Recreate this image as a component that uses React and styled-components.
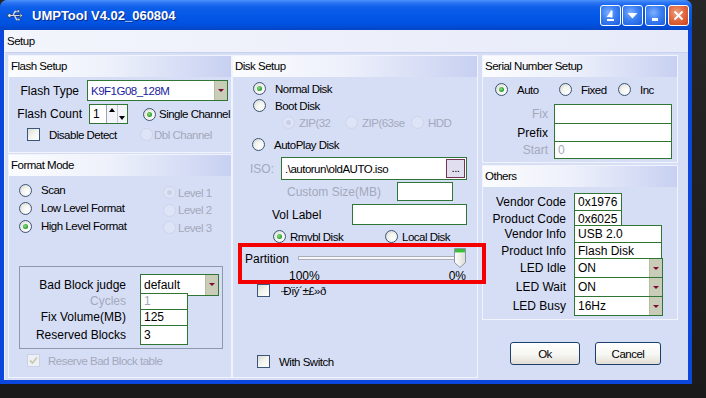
import React from "react";
import styled, { createGlobalStyle, css } from "styled-components";

const GlobalStyle = createGlobalStyle`
  html, body {
    margin: 0;
    padding: 0;
    background: #1e1e1e;
  }
  body {
    font-family: "Liberation Sans", Arial, sans-serif;
    font-size: 12px;
  }
`;

// the dialog's captions use a narrow face; squeeze Arial metrics to match
const narrow = css`
  font-family: "Liberation Sans", Arial, sans-serif;
  font-size: 11.5px;
  letter-spacing: -0.5px;
`;

const GREEN = "#2f7535";
const GREY_TEXT = "#a3a9bb";

const Screen = styled.div`
  width: 706px;
  height: 398px;
  background: linear-gradient(180deg, #262626, #1a1a1a);
  overflow: hidden;
`;

const Window = styled.div`
  width: 692px;
  height: 384px;
  background: #0b47dc;
  border-radius: 8px 8px 0 0;
  display: flex;
  flex-direction: column;
`;

const TitleBar = styled.div`
  height: 30px;
  flex: none;
  display: flex;
  align-items: center;
  padding: 0 3px 0 7px;
  border-radius: 7px 7px 0 0;
  background: linear-gradient(
    180deg,
    #4a92fa 0%,
    #2a72f2 10%,
    #0d5ee9 25%,
    #0457e6 55%,
    #0051e0 80%,
    #0445c6 100%
  );
`;

const TitleText = styled.span`
  font-family: "Liberation Sans", Arial, sans-serif;
  font-weight: bold;
  font-size: 13px;
  color: #fff;
  text-shadow: 1px 1px 0 #0a2a8a;
  margin-left: 9px;
  flex: 1;
`;

const CaptionButtons = styled.div`
  display: flex;
  align-items: center;
  gap: 1px;
`;

const CapButton = styled.div`
  width: 21px;
  height: 21px;
  box-sizing: border-box;
  border: 1px solid #fff;
  border-radius: 3px;
  margin-left: ${(p) => p.$ml || 0}px;
  display: flex;
  align-items: center;
  justify-content: center;
  background: ${(p) =>
    p.$close
      ? "radial-gradient(circle at 40% 35%, #f0a080 0%, #e36b43 45%, #c9421c 100%)"
      : "radial-gradient(circle at 40% 35%, #7fb0ff 0%, #3b7ff2 45%, #1a5ce0 100%)"};
`;

const Client = styled.div`
  flex: 1;
  margin: 0 4px 4px;
  background: #d6def6;
  border-left: 1px solid #eef2fc;
  display: flex;
  flex-direction: column;
`;

const SetupBar = styled.div`
  ${narrow};
  height: 22px;
  line-height: 22px;
  padding-left: 2px;
  background: linear-gradient(90deg, #f3f5fc, #e7ebf9);
  border-bottom: 1px solid #c8d0ee;
`;

const Columns = styled.div`
  display: grid;
  grid-template-columns: 224px 246px 200px;
  padding: 2px 0 2px 3px;
  height: 323px;
`;

const LeftCol = styled.div`
  display: grid;
  grid-template-rows: 98px 1fr;
  row-gap: 1px;
`;

const RightCol = styled.div`
  margin-left: 4px;
  display: flex;
  flex-direction: column;
  gap: 2px;
`;

const Panel = styled.section`
  box-sizing: border-box;
  border: 1px solid #f1f4fc;
  height: ${(p) => (p.$h ? `${p.$h}px` : "auto")};
  display: flex;
  flex-direction: column;
`;

const PanelHeader = styled.div`
  ${narrow};
  height: 21px;
  line-height: 21px;
  padding-left: 2px;
  flex: none;
  background: linear-gradient(90deg, #fbfcfe 0%, #eef1fb 45%, #c7d0f1 100%);
`;

const PanelBody = styled.div`
  padding-top: ${(p) => p.$pt || 0}px;
  display: flex;
  flex-direction: column;
`;

const FieldRow = styled.div`
  display: flex;
  align-items: center;
  gap: ${(p) => p.$gap || 0}px;
  padding-left: ${(p) => p.$pl || 0}px;
  margin-top: ${(p) => p.$mt || 0}px;
  height: ${(p) => (p.$h ? `${p.$h}px` : "auto")};
  flex: none;
`;

const FieldLabel = styled.span`
  font-family: "Liberation Sans", Arial, sans-serif;
  font-size: 12px;
  width: ${(p) => p.$w}px;
  text-align: ${(p) => (p.$left ? "left" : "right")};
  color: ${(p) => (p.$disabled ? GREY_TEXT : "#000")};
  white-space: nowrap;
  flex: none;
`;

const Caption = styled.span`
  ${narrow};
  color: ${(p) => (p.$disabled ? GREY_TEXT : "#000")};
  white-space: nowrap;
`;

const Option = styled.div`
  display: flex;
  align-items: center;
  gap: ${(p) => p.$gap ?? 9}px;
  width: ${(p) => (p.$w ? `${p.$w}px` : "auto")};
  height: ${(p) => (p.$h ? `${p.$h}px` : "auto")};
  margin-left: ${(p) => p.$ml || 0}px;
  flex: none;
`;

const RadioDot = styled.span`
  width: 13px;
  height: 13px;
  box-sizing: border-box;
  border-radius: 50%;
  flex: none;
  display: flex;
  align-items: center;
  justify-content: center;
  border: 1px solid ${(p) => (p.$disabled ? "#cdd4e8" : "#3b5678")};
  background: ${(p) =>
    p.$disabled
      ? "#dde4f7"
      : "radial-gradient(circle at 65% 65%, #ffffff 0%, #f3f3ef 45%, #d2d2ca 100%)"};

  &::after {
    content: "";
    display: ${(p) => (p.$checked ? "block" : "none")};
    width: 5px;
    height: 5px;
    border-radius: 50%;
    background: ${(p) =>
      p.$disabled
        ? "#c9d0e4"
        : "radial-gradient(circle at 40% 40%, #8ee08e 0%, #2ea52e 60%, #1d7d1d 100%)"};
  }
`;

const CheckBox = styled.span`
  width: 13px;
  height: 13px;
  box-sizing: border-box;
  flex: none;
  border: 1px solid ${(p) => (p.$disabled ? "#cbd2e6" : "#3b5678")};
  background: ${(p) =>
    p.$disabled
      ? "#eef0f6"
      : "linear-gradient(135deg, #dcdcd6 0%, #f4f4f0 50%, #ffffff 100%)"};
  display: flex;
  align-items: center;
  justify-content: center;
`;

const TextBox = styled.div`
  box-sizing: border-box;
  width: ${(p) => p.$w}px;
  height: ${(p) => p.$h}px;
  margin-top: ${(p) => p.$mt || 0}px;
  border: 1px solid ${GREEN};
  background: #fff;
  font-family: "Liberation Sans", Arial, sans-serif;
  font-size: 12px;
  color: ${(p) => p.$color || "#000"};
  padding-left: 3px;
  padding-right: ${(p) => (p.$tight ? 0 : 3)}px;
  display: flex;
  align-items: center;
  flex: none;
  white-space: nowrap;
  overflow: hidden;
`;

const ComboText = styled.span`
  ${(p) => p.$narrow && narrow};
  flex: 1;
  overflow: hidden;
`;

const DropButton = styled.span`
  width: 12px;
  align-self: stretch;
  flex: none;
  background: #c9ccb6;
  border-left: 1px solid #b8bca0;
  display: flex;
  align-items: center;
  justify-content: center;

  &::after {
    content: "";
    border-left: 3px solid transparent;
    border-right: 3px solid transparent;
    border-top: 3px solid #7d0a33;
  }
`;

const SpinButtons = styled.span`
  margin-left: auto;
  width: 20px;
  align-self: stretch;
  display: flex;
  border-left: 1px solid #9aa4b4;
  background: #f4f5f8;
`;

const SpinHalf = styled.span`
  flex: 1;
  display: flex;
  justify-content: center;
  align-items: ${(p) => (p.$up ? "flex-start" : "flex-end")};
  padding: 3px 0;
  border-left: ${(p) => (p.$up ? "none" : "1px solid #c0c6d2")};

  &::after {
    content: "";
    border-left: 3px solid transparent;
    border-right: 3px solid transparent;
    ${(p) =>
      p.$up ? "border-bottom: 4px solid #000;" : "border-top: 4px solid #000;"}
  }
`;

const BrowseButton = styled.span`
  ${narrow};
  margin-left: auto;
  margin-right: 1px;
  width: 19px;
  height: 19px;
  box-sizing: border-box;
  border: 1px solid #7a3358;
  background: #e1def0;
  display: flex;
  align-items: center;
  justify-content: center;
  line-height: 1;
`;

const OptionColumns = styled.div`
  display: grid;
  grid-template-columns: 144px auto;
  padding-left: 10px;
  margin-top: 5px;
`;

const OptionStack = styled.div`
  display: flex;
  flex-direction: column;
  padding-top: ${(p) => p.$pt || 0}px;
`;

const GroupBox = styled.div`
  box-sizing: border-box;
  width: 204px;
  height: 83px;
  margin: 29px 0 0 10px;
  border: 1px solid #8d97ae;
  padding-top: 7px;
  display: flex;
  flex-direction: column;
`;

const PartitionBox = styled.div`
  position: relative;
  z-index: 5;
  margin-top: 2px;
  height: 35px;
  padding-left: 12px;
  display: flex;
  flex-direction: column;

  &::after {
    content: "";
    position: absolute;
    left: 5px;
    top: -4px;
    width: 248px;
    height: 41px;
    box-sizing: border-box;
    border: 4px solid #f40000;
    pointer-events: none;
  }
`;

const SliderRow = styled.div`
  display: flex;
  align-items: flex-end;
  height: 23px;
`;

const SliderScale = styled.div`
  font-family: "Liberation Sans", Arial, sans-serif;
  font-size: 12px;
  width: 177px;
  padding-left: 44px;
  display: flex;
  justify-content: space-between;
  line-height: 12px;
`;

const ButtonRow = styled.div`
  display: flex;
  gap: 15px;
  padding-left: 28px;
  margin-top: 20px;
`;

const DialogButton = styled.button`
  ${narrow};
  width: ${(p) => p.$w}px;
  height: 23px;
  border: 1px solid #1c3f6e;
  border-radius: 3px;
  background: linear-gradient(180deg, #ffffff 0%, #f6f6f2 55%, #e2ded4 100%);
  color: #000;
  padding: 0;
`;

const RadioOption = ({ checked, disabled, children, ...rest }) => (
  <Option {...rest}>
    <RadioDot $checked={checked} $disabled={disabled} />
    <Caption $disabled={disabled}>{children}</Caption>
  </Option>
);

const CheckOption = ({ checked, disabled, children, ...rest }) => (
  <Option {...rest}>
    <CheckBox $disabled={disabled}>
      {checked && (
        <svg width="9" height="9" viewBox="0 0 9 9">
          <path d="M1 4.5 L3.5 7 L8 1.5" stroke="#c3cbb0" strokeWidth="1.8" fill="none" />
        </svg>
      )}
    </CheckBox>
    <Caption $disabled={disabled}>{children}</Caption>
  </Option>
);

const Combo = ({ w, h, mt, color, narrowText, children }) => (
  <TextBox $w={w} $h={h} $mt={mt} $color={color} $tight>
    <ComboText $narrow={narrowText}>{children}</ComboText>
    <DropButton />
  </TextBox>
);

const UsbIcon = () => (
  <svg width="16" height="13" viewBox="0 0 16 13">
    <circle cx="2.5" cy="6.5" r="2" fill="#d8dde8" stroke="#233a6e" />
    <path d="M4 6.5 H13" stroke="#233a6e" strokeWidth="2.4" />
    <path d="M4 6.5 H13" stroke="#d8dde8" strokeWidth="1" />
    <path d="M13 3.5 L15.5 6.5 L13 9.5 Z" fill="#d8dde8" stroke="#233a6e" strokeWidth="0.8" />
    <path d="M6 6.5 L8 2.5 H10.5" stroke="#d8dde8" strokeWidth="1.3" fill="none" />
    <rect x="10" y="1" width="2.5" height="2.5" fill="#d8dde8" stroke="#233a6e" strokeWidth="0.6" />
    <path d="M7.5 6.5 L9.5 10.5 H11" stroke="#d8dde8" strokeWidth="1.3" fill="none" />
    <circle cx="11.8" cy="10.5" r="1.2" fill="#d8dde8" stroke="#233a6e" strokeWidth="0.6" />
  </svg>
);

const SliderTrack = () => (
  <svg width="170" height="23" viewBox="0 0 170 23">
    <rect x="1.5" y="9.5" width="166" height="3" fill="#f7f7f7" stroke="#a9aeb8" />
    <defs>
      <linearGradient id="thumb" x1="0" x2="1">
        <stop offset="0" stopColor="#ffffff" />
        <stop offset="1" stopColor="#dcdcd4" />
      </linearGradient>
    </defs>
    <path
      d="M157.5 1.5 H168.5 V15.5 L163 20.5 L157.5 15.5 Z"
      fill="url(#thumb)"
      stroke="#8a96a8"
    />
    <rect x="158" y="2" width="10" height="3" fill="#3dbb3d" />
    <rect x="158" y="5" width="10" height="1" fill="#9be09b" />
  </svg>
);

export default function App() {
  return (
    <>
      <GlobalStyle />
      <Screen>
        <Window>
          <TitleBar>
            <UsbIcon />
            <TitleText>UMPTool V4.02_060804</TitleText>
            <CaptionButtons>
              <CapButton>
                <svg width="13" height="13" viewBox="0 0 13 13">
                  <path d="M7.5 1.5 L2.5 8 H7.5 Z" fill="#fff" />
                  <rect x="6.5" y="1.5" width="2" height="7" fill="#fff" />
                  <rect x="3" y="10" width="7" height="2" fill="#fff" />
                </svg>
              </CapButton>
              <CapButton>
                <svg width="13" height="13" viewBox="0 0 13 13">
                  <path d="M1.5 4 H11.5 L6.5 9.5 Z" fill="#fff" />
                </svg>
              </CapButton>
              <CapButton $ml={1}>
                <svg width="13" height="13" viewBox="0 0 13 13">
                  <rect x="3" y="9" width="6" height="3" fill="#fff" />
                </svg>
              </CapButton>
              <CapButton $close $ml={1}>
                <svg width="13" height="13" viewBox="0 0 13 13">
                  <path d="M2.5 2.5 L10.5 10.5 M10.5 2.5 L2.5 10.5" stroke="#fff" strokeWidth="2" />
                </svg>
              </CapButton>
            </CaptionButtons>
          </TitleBar>

          <Client>
            <SetupBar>Setup</SetupBar>
            <Columns>
              <LeftCol>
                <Panel>
                  <PanelHeader>Flash Setup</PanelHeader>
                  <PanelBody $pt={3}>
                    <FieldRow $gap={8}>
                      <FieldLabel $w={70}>Flash Type</FieldLabel>
                      <Combo w={141} h={21} color="#1b1ba0" narrowText>
                        K9F1G08_128M
                      </Combo>
                    </FieldRow>
                    <FieldRow $gap={7} $mt={3}>
                      <FieldLabel $w={73}>Flash Count</FieldLabel>
                      <TextBox $w={39} $h={20} $tight>
                        1
                        <SpinButtons>
                          <SpinHalf $up />
                          <SpinHalf />
                        </SpinButtons>
                      </TextBox>
                      <RadioOption checked $gap={3} $ml={8}>
                        Single Channel
                      </RadioOption>
                    </FieldRow>
                    <FieldRow $pl={18} $mt={4} $h={13}>
                      <CheckOption $w={113} $gap={9}>
                        Disable Detect
                      </CheckOption>
                      <RadioOption disabled $gap={1}>
                        Dbl Channel
                      </RadioOption>
                    </FieldRow>
                  </PanelBody>
                </Panel>

                <Panel>
                  <PanelHeader>Format Mode</PanelHeader>
                  <PanelBody>
                    <OptionColumns>
                      <OptionStack>
                        <RadioOption $h={18}>Scan</RadioOption>
                        <RadioOption $h={18}>Low Level Format</RadioOption>
                        <RadioOption $h={18} checked>
                          High Level Format
                        </RadioOption>
                      </OptionStack>
                      <OptionStack $pt={3}>
                        <RadioOption $h={17.5} $gap={2} disabled checked>
                          Level 1
                        </RadioOption>
                        <RadioOption $h={17.5} $gap={2} disabled>
                          Level 2
                        </RadioOption>
                        <RadioOption $h={17.5} $gap={2} disabled>
                          Level 3
                        </RadioOption>
                      </OptionStack>
                    </OptionColumns>

                    <GroupBox>
                      <FieldRow $gap={14}>
                        <FieldLabel $w={106}>Bad Block judge</FieldLabel>
                        <Combo w={79} h={22}>
                          default
                        </Combo>
                      </FieldRow>
                      <FieldRow $gap={14} $mt={-3}>
                        <FieldLabel $w={106} $disabled>
                          Cycles
                        </FieldLabel>
                        <TextBox $w={48} $h={17} $color={GREY_TEXT}>
                          1
                        </TextBox>
                      </FieldRow>
                      <FieldRow $gap={14} $mt={-1}>
                        <FieldLabel $w={106}>Fix Volume(MB)</FieldLabel>
                        <TextBox $w={48} $h={17}>
                          125
                        </TextBox>
                      </FieldRow>
                      <FieldRow $gap={14} $mt={-1}>
                        <FieldLabel $w={106}>Reserved Blocks</FieldLabel>
                        <TextBox $w={48} $h={20}>
                          3
                        </TextBox>
                      </FieldRow>
                    </GroupBox>

                    <FieldRow $pl={18} $mt={5} $h={14}>
                      <CheckOption disabled checked $gap={8}>
                        Reserve Bad Block table
                      </CheckOption>
                    </FieldRow>
                  </PanelBody>
                </Panel>
              </LeftCol>

              <Panel>
                <PanelHeader>Disk Setup</PanelHeader>
                <PanelBody $pt={3}>
                  <FieldRow $pl={20} $h={17}>
                    <RadioOption checked>Normal Disk</RadioOption>
                  </FieldRow>
                  <FieldRow $pl={20} $h={17}>
                    <RadioOption>Boot Disk</RadioOption>
                  </FieldRow>
                  <FieldRow $pl={49} $h={17}>
                    <RadioOption disabled checked $gap={4} $w={63}>
                      ZIP(32
                    </RadioOption>
                    <RadioOption disabled $gap={4} $w={66}>
                      ZIP(63se
                    </RadioOption>
                    <RadioOption disabled $gap={4}>
                      HDD
                    </RadioOption>
                  </FieldRow>
                  <FieldRow $pl={19} $mt={5} $h={17}>
                    <RadioOption>AutoPlay Disk</RadioOption>
                  </FieldRow>
                  <FieldRow $pl={17} $mt={4}>
                    <FieldLabel $w={31} $left $disabled>
                      ISO:
                    </FieldLabel>
                    <TextBox $w={186} $h={23} $tight>
                      <ComboText $narrow>.\autorun\oldAUTO.iso</ComboText>
                      <BrowseButton>...</BrowseButton>
                    </TextBox>
                  </FieldRow>
                  <FieldRow $pl={54} $mt={2}>
                    <FieldLabel $w={110} $left $disabled>
                      Custom Size(MB)
                    </FieldLabel>
                    <TextBox $w={56} $h={19} />
                  </FieldRow>
                  <FieldRow $pl={39} $mt={3}>
                    <FieldLabel $w={80} $left>
                      Vol Label
                    </FieldLabel>
                    <TextBox $w={115} $h={21} />
                  </FieldRow>
                  <FieldRow $pl={40} $mt={3} $h={17}>
                    <RadioOption checked $gap={4} $w={112}>
                      Rmvbl Disk
                    </RadioOption>
                    <RadioOption $gap={4}>Local Disk</RadioOption>
                  </FieldRow>

                  <PartitionBox>
                    <SliderRow>
                      <FieldLabel $w={52} $left style={{ paddingBottom: 4 }}>
                        Partition
                      </FieldLabel>
                      <SliderTrack />
                    </SliderRow>
                    <SliderScale>
                      <span>100%</span>
                      <span>0%</span>
                    </SliderScale>
                  </PartitionBox>

                  <FieldRow $pl={24} $mt={2} $h={13}>
                    <CheckOption $gap={10}>·Ðïý´±£»ð</CheckOption>
                  </FieldRow>
                  <FieldRow $pl={24} $mt={58} $h={13}>
                    <CheckOption $gap={9}>With Switch</CheckOption>
                  </FieldRow>
                </PanelBody>
              </Panel>

              <RightCol>
                <Panel $h={108}>
                  <PanelHeader>Serial Number Setup</PanelHeader>
                  <PanelBody $pt={4}>
                    <FieldRow $pl={12} $h={17}>
                      <RadioOption checked $w={64}>
                        Auto
                      </RadioOption>
                      <RadioOption $w={59}>Fixed</RadioOption>
                      <RadioOption>Inc</RadioOption>
                    </FieldRow>
                    <FieldRow $gap={6} $mt={6}>
                      <FieldLabel $w={65} $disabled>
                        Fix
                      </FieldLabel>
                      <TextBox $w={118} $h={20} />
                    </FieldRow>
                    <FieldRow $gap={6} $mt={-1}>
                      <FieldLabel $w={65}>Prefix</FieldLabel>
                      <TextBox $w={118} $h={19} />
                    </FieldRow>
                    <FieldRow $gap={6} $mt={-1}>
                      <FieldLabel $w={65} $disabled>
                        Start
                      </FieldLabel>
                      <TextBox $w={118} $h={18} $color={GREY_TEXT}>
                        0
                      </TextBox>
                    </FieldRow>
                  </PanelBody>
                </Panel>

                <Panel $h={155}>
                  <PanelHeader>Others</PanelHeader>
                  <PanelBody $pt={6}>
                    <FieldRow $gap={8}>
                      <FieldLabel $w={83}>Vendor Code</FieldLabel>
                      <TextBox $w={48} $h={18}>
                        0x1976
                      </TextBox>
                    </FieldRow>
                    <FieldRow $gap={8} $mt={-1}>
                      <FieldLabel $w={83}>Product Code</FieldLabel>
                      <TextBox $w={48} $h={17}>
                        0x6025
                      </TextBox>
                    </FieldRow>
                    <FieldRow $gap={8} $mt={-2}>
                      <FieldLabel $w={83}>Vendor Info</FieldLabel>
                      <TextBox $w={88} $h={18}>
                        USB 2.0
                      </TextBox>
                    </FieldRow>
                    <FieldRow $gap={8} $mt={-1}>
                      <FieldLabel $w={83}>Product Info</FieldLabel>
                      <TextBox $w={88} $h={17}>
                        Flash Disk
                      </TextBox>
                    </FieldRow>
                    <FieldRow $gap={8} $mt={-1}>
                      <FieldLabel $w={83}>LED Idle</FieldLabel>
                      <Combo w={89} h={20}>
                        ON
                      </Combo>
                    </FieldRow>
                    <FieldRow $gap={8} $mt={-1}>
                      <FieldLabel $w={83}>LED Wait</FieldLabel>
                      <Combo w={89} h={20}>
                        ON
                      </Combo>
                    </FieldRow>
                    <FieldRow $gap={8} $mt={-1}>
                      <FieldLabel $w={83}>LED Busy</FieldLabel>
                      <Combo w={89} h={20}>
                        16Hz
                      </Combo>
                    </FieldRow>
                  </PanelBody>
                </Panel>

                <ButtonRow>
                  <DialogButton $w={70}>Ok</DialogButton>
                  <DialogButton $w={66}>Cancel</DialogButton>
                </ButtonRow>
              </RightCol>
            </Columns>
          </Client>
        </Window>
      </Screen>
    </>
  );
}
